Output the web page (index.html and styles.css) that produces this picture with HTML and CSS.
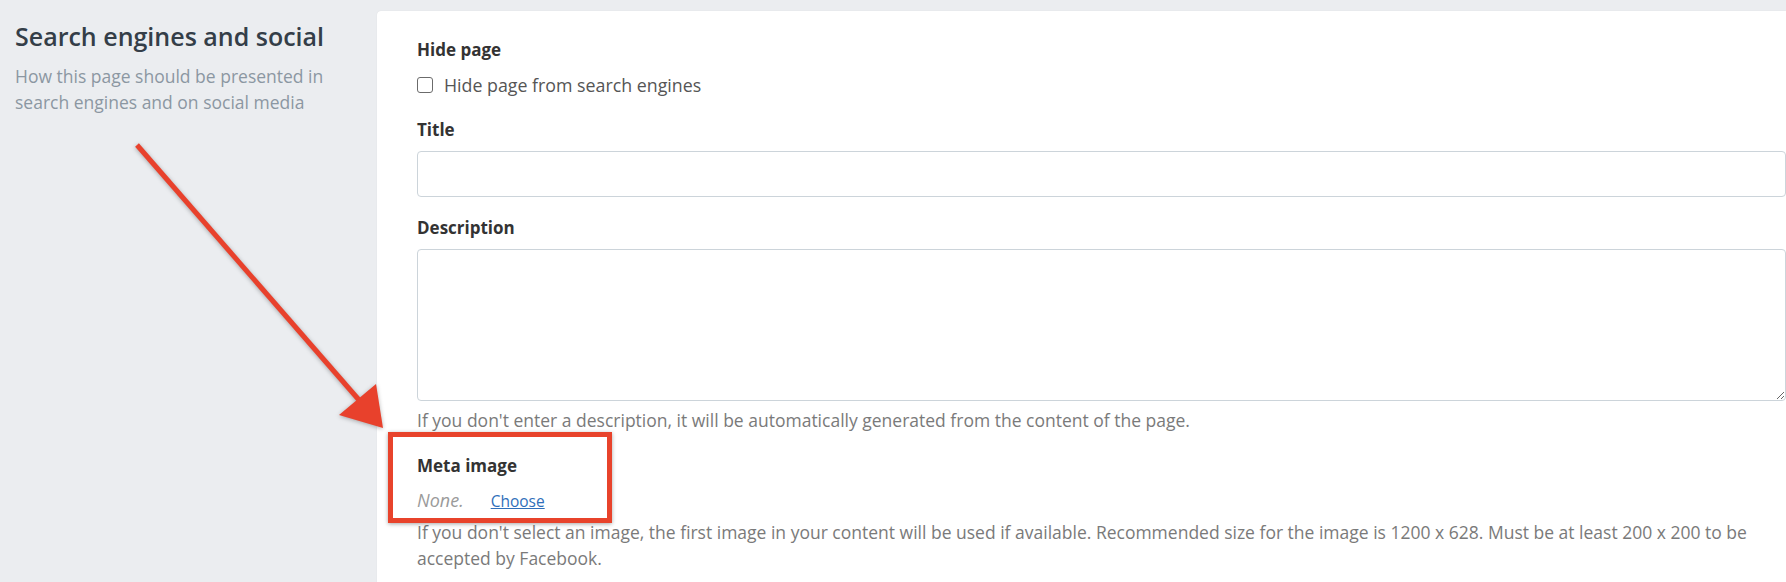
FILE: index.html
```html
<!DOCTYPE html>
<html lang="en">
<head>
    <meta charset="UTF-8">
    <title>Page settings</title>
    <link rel="stylesheet" href="styles.css">
</head>
<body>
<div id="page">
    <div id="section-info">
        <h2>Search engines and social</h2>
        <p>How this page should be presented in search engines and on social media</p>
    </div>

    <div id="card">
        <div class="field">
            <label class="field-label">Hide page</label>
            <label class="check-row"><input type="checkbox" id="hide-page">Hide page from search engines</label>
        </div>

        <div class="field">
            <label class="field-label" for="seo-title">Title</label>
            <input type="text" id="seo-title" class="text-input">
        </div>

        <div class="field">
            <label class="field-label" for="seo-description">Description</label>
            <textarea id="seo-description" class="text-area"></textarea>
            <p class="help">If you don't enter a description, it will be automatically generated from the content of the page.</p>
        </div>

        <div class="field meta-field">
            <div class="callout"></div>
            <label class="field-label">Meta image</label>
            <div class="image-picker">
                <span class="none">None.</span>
                <a href="#" class="choose">Choose</a>
            </div>
            <p class="help">If you don't select an image, the first image in your content will be used if available. Recommended size for the image is 1200 x 628. Must be at least 200 x 200 to be accepted by Facebook.</p>
        </div>
    </div>
</div>

<svg id="arrow" width="1786" height="582" viewBox="0 0 1786 582">
    <line x1="137" y1="145" x2="359" y2="400" stroke="#e8412c" stroke-width="5" stroke-linecap="butt"/>
    <polygon points="383,428 339,415 376,384" fill="#e8412c"/>
</svg>
</body>
</html>
```

FILE: styles.css
```css
html, body {
    margin: 0;
    overflow: hidden;
}
body {
    position: relative;
    background: #ebedf0;
    font-family: "Open Sans", "Liberation Sans", sans-serif;
    color: #333;
}
#page {
    display: flex;
    align-items: flex-start;
    padding-top: 11px;
}
#section-info {
    box-sizing: border-box;
    width: 377px;
    flex: none;
    padding: 0 30px 0 15px;
}
#section-info h2 {
    margin: 10px 0 0 0;
    font-size: 25px;
    line-height: 30px;
    font-weight: 600;
    color: #343e48;
}
#section-info p {
    margin: 12px 0 0 0;
    font-size: 17.5px;
    line-height: 26px;
    color: #8b97a2;
}
#card {
    flex: 1;
    min-height: 600px;
    background: #fff;
    border-radius: 4px 0 0 0;
    box-shadow: 0 0 1px rgba(0, 0, 0, 0.12);
    padding: 27px 0 0 40px;
    display: flex;
    flex-direction: column;
    gap: 19px;
}
.field {
    display: flex;
    flex-direction: column;
}
.field-label {
    display: block;
    font-size: 17px;
    line-height: 24px;
    font-weight: 700;
    color: #333;
    margin-bottom: 9px;
}
.check-row {
    display: flex;
    align-items: center;
    height: 28px;
    font-size: 17.8px;
    color: #555;
}
.check-row input {
    appearance: none;
    -webkit-appearance: none;
    width: 16px;
    height: 16px;
    margin: 0 11px 0 0;
    border: 1px solid #6b6b6b;
    border-radius: 3px;
    background: #fff;
}
.text-input, .text-area {
    display: block;
    box-sizing: border-box;
    width: 100%;
    margin: 0;
    border: 1px solid #ccd4da;
    border-radius: 4px;
    font-family: inherit;
    font-size: 16px;
    background: #fff;
}
.text-input {
    height: 46px;
}
.text-area {
    height: 152px;
    resize: vertical;
}
.help {
    margin: 6px 0 2px 0;
    font-size: 17.5px;
    line-height: 26px;
    color: #7a7a7a;
}
.meta-field {
    position: relative;
}
.callout {
    position: absolute;
    top: -22px;
    left: -29px;
    width: 214px;
    height: 81px;
    border: 5px solid #e8432b;
    box-shadow: 0 1px 4px rgba(0, 0, 0, 0.35);
}
.image-picker {
    display: flex;
    align-items: baseline;
    gap: 27px;
    height: 26px;
    line-height: 26px;
}
.none {
    font-size: 18px;
    font-style: italic;
    color: #9a9a9a;
}
.choose {
    font-size: 15.5px;
    color: #2f6fba;
}
#arrow {
    position: absolute;
    top: 0;
    left: 0;
    pointer-events: none;
    filter: drop-shadow(0 1px 2px rgba(0, 0, 0, 0.3));
}
```
